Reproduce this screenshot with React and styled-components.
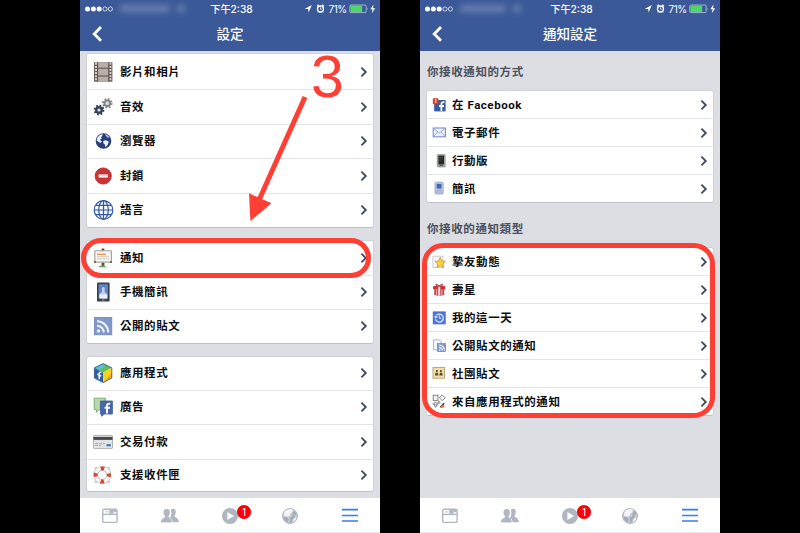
import React from "react";
import styled, { createGlobalStyle } from "styled-components";

const RED = "#ff3f33";

/* ====================== settings icons (20 x 20) ====================== */

const FilmIcon = () => (
  <svg width="20" height="20" viewBox="0 0 20 20">
    <rect x="1" y="0.3" width="18.4" height="19.4" fill="#6b5d57" />
    <rect x="5" y="0.3" width="10.4" height="19.4" fill="#b8afa9" />
    <path d="M3 0.8V19.6M17.4 0.8V19.6" stroke="#d8d2cd" strokeWidth="2" strokeDasharray="2 1.1" />
    <path d="M4.6 0.3V19.7M15.8 0.3V19.7" stroke="#5d4f49" strokeWidth="0.8" />
    <path d="M4.6 6.2H15.8M4.6 14H15.8" stroke="#5d4f49" strokeWidth="1" />
  </svg>
);

const GearsIcon = () => (
  <svg width="20" height="20" viewBox="0 0 20 20">
    <circle cx="14.3" cy="6.3" r="4.3" fill="none" stroke="#85888d" strokeWidth="2" strokeDasharray="1.7 1.68" />
    <circle cx="14.3" cy="6.3" r="2.9" fill="#d5d6d8" stroke="#7d8085" strokeWidth="1.8" />
    <circle cx="6" cy="13" r="4.4" fill="none" stroke="#333e52" strokeWidth="2" strokeDasharray="1.7 1.75" />
    <circle cx="6" cy="13" r="2.8" fill="#dfe2e8" stroke="#36435a" strokeWidth="2.4" />
  </svg>
);

const GlobeIcon = () => (
  <svg width="20" height="20" viewBox="0 0 20 20">
    <circle cx="10.5" cy="10" r="7.8" fill="#263e7c" />
    <path d="M4.4 6.6L6.8 4 9.6 3 9.4 4.8 7.9 6.2 9 7.4 7.4 8 7.4 9.4 8.9 10.6 7.4 12 5.4 10.8 3.6 9.4Z" fill="#eef2fb" />
    <path d="M12 3L15 4.4 16.6 6.6 14.6 6.4 12.9 5Z" fill="#b6c4e4" />
    <path d="M10.2 10L12.6 9.2 15.8 10.6 14.9 13.4 12.5 16.2 11.8 13.6 10.4 12.2Z" fill="#eef2fb" />
  </svg>
);

const BlockIcon = () => (
  <svg width="20" height="20" viewBox="0 0 20 20">
    <circle cx="10.2" cy="10" r="8.1" fill="#cb3436" stroke="#b02528" strokeWidth="0.8" />
    <rect x="5.6" y="8.4" width="9.2" height="3.2" fill="#fbeceb" />
  </svg>
);

const LanguageIcon = () => (
  <svg width="20" height="20" viewBox="0 0 20 20">
    <g fill="#f3f6fd" stroke="#3357a0" strokeWidth="1.2">
      <circle cx="10.5" cy="10" r="9.3" />
      <ellipse cx="10.5" cy="10" rx="4.8" ry="9.3" />
      <path d="M10.5 0.8V19.2M1.3 10H19.7M3 5.3H18M3 14.7H18" />
    </g>
  </svg>
);

const BoardIcon = () => (
  <svg width="20" height="20" viewBox="0 0 20 20">
    <path d="M8.7 0.4H11.3V3H8.7ZM8.6 14.6H11.4V18.4H8.6Z" fill="#7a4a29" />
    <rect x="1.2" y="2.2" width="17.8" height="12.6" rx="1" fill="#aaa49b" />
    <rect x="2.4" y="3.3" width="15.4" height="10.2" fill="#f7f5f1" />
    <path d="M4 6.3H13" stroke="#f08a3c" strokeWidth="1.2" />
    <path d="M4 8.6H16M4 10.8H16" stroke="#cdc9c2" strokeWidth="0.9" />
    <path d="M5.6 19.2L7.2 17.4 8.8 18.2 10.4 17.2 12 18.2 14.4 19.2Z" fill="#57a35b" />
    <path d="M1 14H3M17 14H19" stroke="#57514b" strokeWidth="1.4" />
  </svg>
);

const PhoneIcon = () => (
  <svg width="20" height="20" viewBox="0 0 20 20">
    <rect x="4" y="0.4" width="12.6" height="19.2" rx="1.2" fill="#3b3f47" />
    <rect x="5.6" y="2.2" width="9.4" height="14.2" fill="#5e83c8" />
    <path d="M6.3 16.4V13.2Q6.3 11.2 8.6 10.4L9 8.6Q8.2 5 10.3 4.9 12.3 5 11.6 8.6L12 10.4Q14.3 11.2 14.3 13.2V16.4Z" fill="#bed0f2" />
    <rect x="6.6" y="12.6" width="7.4" height="3.8" fill="#edf2fc" />
    <rect x="9" y="17.6" width="2.6" height="1" fill="#9ba0a8" />
  </svg>
);

const FeedIcon = () => (
  <svg width="20" height="20" viewBox="0 0 20 20">
    <rect x="1.4" y="1.4" width="17.4" height="17.4" fill="#8398ca" stroke="#7085b9" strokeWidth="0.8" />
    <circle cx="5.5" cy="15" r="1.7" fill="#edf1fa" />
    <path d="M4 9.7A6.6 6.6 0 0 1 10.7 16.5M4 5.3A11 11 0 0 1 15.2 16.5" fill="none" stroke="#edf1fa" strokeWidth="2.1" />
  </svg>
);

const CubeIcon = () => (
  <svg width="20" height="20" viewBox="0 0 20 20">
    <path d="M10.2 0.6L18.8 4.8 10.2 9.4 1.4 4.8Z" fill="#63bd55" />
    <path d="M10.2 0.6L1.4 4.8 5.8 7 11.8 3.4Z" fill="#59bfe2" />
    <path d="M1.4 4.8L10.2 9.4V19.6L1.4 15Z" fill="#2861a9" />
    <path d="M18.8 4.8L10.2 9.4V19.6L18.8 15Z" fill="#f6d21e" />
    <path d="M18.8 10L10.2 19.6 18.8 15Z" fill="#f0ab1c" />
    <path d="M10.2 0.6L18.8 4.8V15L10.2 19.6 1.4 15V4.8Z" fill="none" stroke="#31527e" strokeWidth="0.8" />
    <path d="M8.4 9.6Q6.2 8.6 6.2 10.8V16.2M4.4 11.2L8.2 13" fill="none" stroke="#fff" strokeWidth="1.5" />
  </svg>
);

const AdsIcon = () => (
  <svg width="20" height="20" viewBox="0 0 20 20">
    <path d="M1.2 1.2H12.4V12.6H6L3.4 15.4V12.6H1.2Z" fill="#b5d8ad" stroke="#72a96d" strokeWidth="0.9" />
    <path d="M7.4 4H19.4V17H11.4L8.6 19.2V17H7.4Z" fill="#4968ac" stroke="#3b5998" strokeWidth="0.8" />
    <path d="M17.2 6.8Q14 6.2 14 9V16.6M11.6 10.8H17" fill="none" stroke="#fff" strokeWidth="2" />
  </svg>
);

const CardIcon = () => (
  <svg width="20" height="20" viewBox="0 0 20 20">
    <rect x="0.5" y="3.4" width="19" height="13.2" rx="1" fill="#e3e3e4" stroke="#a0a1a4" strokeWidth="0.8" />
    <path d="M0.5 6.4H19.5" stroke="#48494d" strokeWidth="3" />
    <path d="M2 11.6H12M2 13.4H8" stroke="#a6a8ad" strokeWidth="1" strokeDasharray="3 1" />
    <rect x="13.6" y="12" width="4.2" height="2.4" fill="#4b79bc" />
  </svg>
);

const BuoyIcon = () => (
  <svg width="20" height="20" viewBox="0 0 20 20">
    <circle cx="9.3" cy="10" r="6.6" fill="none" stroke="#aaa5a1" strokeWidth="4.6" />
    <circle cx="9.3" cy="10" r="6.6" fill="none" stroke="#f7f4f1" strokeWidth="3.6" />
    <circle
      cx="9.3"
      cy="10"
      r="6.6"
      fill="none"
      stroke="#cf4a3f"
      strokeWidth="4"
      strokeDasharray="3.6 6.77"
      strokeDashoffset="1.8"
    />
    <path d="M2 4.4V2.6H4M16.6 4.4V2.6H14.6M2 15.6V17.4H4M16.6 15.6V17.4H14.6" fill="none" stroke="#b9b3ae" strokeWidth="0.8" />
  </svg>
);

/* ====================== notification icons (14 x 14) ====================== */

const FbIcon = () => (
  <svg width="14" height="14" viewBox="0 0 14 14">
    <rect x="2.2" y="2" width="11.4" height="11.4" fill="#355ba1" />
    <path d="M12.4 4.2Q9.4 3.6 9.4 6.4V13M7 8H12" fill="none" stroke="#fff" strokeWidth="1.8" />
    <rect x="0.8" y="0.2" width="5.6" height="6" rx="0.8" fill="#dd432f" />
    <path d="M3.7 1.4V4.8" stroke="#fff" strokeWidth="1" />
  </svg>
);

const MailIcon = () => (
  <svg width="14" height="14" viewBox="0 0 14 14">
    <rect x="1.2" y="2" width="12.2" height="8.8" fill="#edf2fc" stroke="#6d86c3" />
    <path d="M1.4 2.4L7.3 7 13.2 2.4M1.4 10.6L5.5 6M13.2 10.6L9.2 6" fill="none" stroke="#8298ce" strokeWidth="0.8" />
  </svg>
);

const MobileIcon = () => (
  <svg width="14" height="14" viewBox="0 0 14 14">
    <rect x="5.2" y="0.4" width="8" height="12.6" rx="1" fill="#a9abaa" stroke="#82847f" strokeWidth="0.6" />
    <rect x="6.4" y="1.6" width="5.6" height="8.8" fill="#262829" />
    <path d="M7 3.6H11.2M7 6H10" stroke="#515653" strokeWidth="0.8" />
    <rect x="7.5" y="10.9" width="3.4" height="1" fill="#454745" />
  </svg>
);

const SmsIcon = () => (
  <svg width="14" height="14" viewBox="0 0 14 14">
    <rect x="3" y="0.2" width="8.2" height="11.8" rx="1" fill="#c5d0e6" stroke="#8b9dc6" strokeWidth="0.8" />
    <rect x="4.6" y="1.8" width="5" height="4.8" fill="#4769b4" />
    <path d="M4.6 8.2H9.6M4.6 10H9.6" stroke="#7289bb" strokeWidth="0.9" strokeDasharray="1.2 0.7" />
  </svg>
);

const StarIcon = () => (
  <svg width="14" height="14" viewBox="0 0 14 14">
    <rect x="0.9" y="1.2" width="10" height="11.4" fill="#f5f6f8" stroke="#bfc4cc" strokeWidth="0.8" />
    <path d="M8.2 2.4L9.9 6 13.5 6.4 10.8 8.9 11.6 12.6 8.2 10.7 4.9 12.6 5.7 8.9 3 6.4 6.5 6Z" fill="#fcd13b" stroke="#d29022" strokeWidth="0.8" />
  </svg>
);

const GiftIcon = () => (
  <svg width="14" height="14" viewBox="0 0 14 14">
    <path d="M1 3.2L7 2.4 13.4 3.2V6.2H1Z" fill="#c9373c" />
    <path d="M2.2 6H12.2V12L7.2 13 2.2 12Z" fill="#c9484b" />
    <path d="M4.6 6.4V12M9.8 6.4V12" stroke="#eebdba" strokeWidth="0.9" />
    <path d="M7.2 3V12.8" stroke="#f4d9d7" strokeWidth="2" />
    <path d="M7.2 3.2Q3.8 0 3.8 1.8 3.8 3.6 7.2 3.2 10.6 3.6 10.7 1.8 10.6 0 7.2 3.2Z" fill="#f1cbca" stroke="#bd3238" strokeWidth="1" />
  </svg>
);

const HistoryIcon = () => (
  <svg width="14" height="14" viewBox="0 0 14 14">
    <rect x="1.2" y="0.9" width="12" height="12" fill="#5077dd" stroke="#3d62c5" strokeWidth="0.8" />
    <path d="M3.6 8.4A4 4 0 1 0 4.6 4.2" fill="none" stroke="#dce7ff" strokeWidth="1.2" />
    <path d="M2.3 4.4L6 5.8 3.2 7.8Z" fill="#dce7ff" />
    <path d="M7.4 4.6V7.2H9.4" fill="none" stroke="#dce7ff" />
  </svg>
);

const PublicPostIcon = () => (
  <svg width="14" height="14" viewBox="0 0 14 14">
    <path d="M1.4 0.9H7.6L9.2 2.5V10.8H1.4Z" fill="#f4f6fa" stroke="#9aa6be" strokeWidth="0.8" />
    <rect x="5.6" y="4.6" width="8" height="8" fill="#7f98cf" stroke="#617ab4" strokeWidth="0.6" />
    <path d="M7 8.4A3.2 3.2 0 0 1 10.2 11.6M7 6A5.6 5.6 0 0 1 12.6 11.6" fill="none" stroke="#fff" strokeWidth="1.1" />
    <circle cx="7.7" cy="11" r="0.8" fill="#fff" />
  </svg>
);

const GroupIcon = () => (
  <svg width="14" height="14" viewBox="0 0 14 14">
    <rect x="1" y="0.4" width="11.6" height="10.8" fill="#f3dfa8" stroke="#b39d6b" strokeWidth="0.9" />
    <circle cx="4.9" cy="4.1" r="1.1" fill="#5b4b33" />
    <circle cx="8.9" cy="4.1" r="1.1" fill="#5b4b33" />
    <path d="M3 8.5Q3 5.6 4.9 5.6 6.4 5.6 6.4 8.5ZM7.3 8.5Q7.3 5.6 8.9 5.6 10.7 5.6 10.7 8.5Z" fill="#5b4b33" />
  </svg>
);

const AppsIcon = () => (
  <svg width="14" height="14" viewBox="0 0 14 14">
    <g fill="#f6f6f6" stroke="#77787a" strokeWidth="0.9">
      <rect x="1.2" y="0.2" width="4.8" height="5.4" />
      <path d="M10.3 -0.1L13.2 2.8 10.3 5.7 7.4 2.8Z" />
      <path d="M0.8 8L3.6 12.4 6.2 8" />
      <circle cx="3.4" cy="8.6" r="1.3" />
      <circle cx="7" cy="7.4" r="1" />
      <path d="M8.4 12.4L12.2 8.2" stroke="#3c3c3c" strokeWidth="1.6" />
    </g>
    <path d="M9 10.4H12.4V12.6H9Z" fill="#df7a37" />
  </svg>
);

/* ====================== bars ====================== */

function StatusIcons() {
  return (
    <StatusRight>
      <svg width="22" height="12" viewBox="0 0 22 12">
        <path d="M7.8 2L0.6 6H4.2L4.6 9.6Z" fill="#fff" />
        <circle cx="16.5" cy="6" r="3" fill="none" stroke="#fff" strokeWidth="1.3" />
        <path d="M13 3.2L14.8 1.8M20 3.2L18.2 1.8" stroke="#fff" strokeWidth="1.1" />
        <path d="M14.4 8.6L13.8 9.4M18.6 8.6L19.2 9.4" stroke="#fff" strokeWidth="0.9" />
        <path d="M16.5 4.4V6.2H17.8" fill="none" stroke="#fff" strokeWidth="0.8" />
      </svg>
      <Percent>71%</Percent>
      <svg width="29" height="12" viewBox="0 0 29 12">
        <rect x="1.8" y="2" width="16.4" height="7.6" rx="1.2" fill="none" stroke="#b9c5de" strokeWidth="0.8" />
        <rect x="2.4" y="2.6" width="11.8" height="6.4" fill="#4cd864" />
        <path d="M19 4.5Q20.2 5.8 19 7.1Z" fill="#b9c5de" />
        <path d="M25.4 1.4L22.4 6.3H24.6L23.8 10.2 27.2 5.2H25Z" fill="#fff" />
      </svg>
    </StatusRight>
  );
}

function Header({ title, wifi }) {
  return (
    <HeaderBar>
      <StatusBar>
        <Signal>
          <svg width="28" height="6" viewBox="0 0 28 6">
            <circle cx="2.5" cy="3" r="2.5" fill="#fff" />
            <circle cx="8.4" cy="3" r="2.5" fill="#fff" />
            <circle cx="14.2" cy="3" r="2.5" fill="#fff" />
            <circle cx="20" cy="3" r="2.1" fill="none" stroke="#fff" strokeWidth="0.7" />
            <circle cx="25.4" cy="3" r="2.1" fill="none" stroke="#fff" strokeWidth="0.7" />
          </svg>
          <Smudge $w={wifi ? 46 : 50} />
          <Smudge $w={8} />
        </Signal>
        <Clock>下午2:38</Clock>
        <StatusIcons />
      </StatusBar>
      <TitleBar>
        <svg width="12" height="18" viewBox="0 0 12 18">
          <path d="M10 2L3.2 8.9 10 15.8" fill="none" stroke="#fff" strokeWidth="2.8" />
        </svg>
        <Title>{title}</Title>
        <span />
      </TitleBar>
    </HeaderBar>
  );
}

function TabBar() {
  return (
    <Tabs>
      <Tab>
        <svg width="18" height="18" viewBox="0 0 18 18">
          <rect x="1.7" y="2.2" width="14.4" height="13.2" rx="1.5" fill="none" stroke="#b1b7c2" strokeWidth="1.4" />
          <path d="M1.8 7.4H16" stroke="#b1b7c2" strokeWidth="1.4" />
          <path d="M4 4.8H7.6" stroke="#d3d7de" strokeWidth="1.4" />
          <rect x="8.4" y="3" width="4" height="3.8" fill="#b1b7c2" />
          <rect x="12.4" y="3" width="3" height="2.2" fill="#b1b7c2" />
        </svg>
      </Tab>
      <Tab>
        <svg width="20" height="18" viewBox="0 0 20 18">
          <g fill="#b1b7c2">
            <path d="M10.8 2.8Q13 1 15.2 2.6 16.4 4.6 15.2 7.4 14.4 8.8 14.8 10 18.6 11 18.8 15.2H12.8Q12.2 12 9.7 10.6 11.4 9.8 11 8.4 12 6 10.8 2.8Z" />
            <path d="M6.6 2.1Q10 2 9.9 5.4 9.8 7.6 8.7 8.8 8.3 10.2 9.4 10.9 11.8 11.6 11.8 15.4H0.9Q1 11.8 4.4 10.7 5.4 10 4.8 8.8 3.4 7.6 3.5 5.4 3.5 2.1 6.6 2.1Z" />
          </g>
        </svg>
      </Tab>
      <Tab>
        <svg width="18" height="18" viewBox="0 0 18 18">
          <circle cx="9" cy="9" r="8" fill="#b1b7c2" />
          <path d="M6.4 5L13 9 6.4 13Z" fill="#fff" />
        </svg>
        <TabBadge>1</TabBadge>
      </Tab>
      <Tab>
        <svg width="18" height="18" viewBox="0 0 18 18">
          <circle cx="9" cy="9" r="7.5" fill="#c6cad3" stroke="#b1b7c2" strokeWidth="1" />
          <path d="M4.4 3.8Q8 1.2 12 2.6L11 5.4 9.2 6.6 8.8 8.8 6.8 9.6 3.2 9 3 6.4Z" fill="#f4f5f7" />
          <path d="M2.4 9.6L6 10.6 7.6 12.4 6.6 15.2Q3 13.6 2.4 9.6Z" fill="#a3aab7" />
          <path d="M13.2 4L15 5.8 15.2 8 13.4 7.6 13.4 10.4 11.6 12 10.4 15.6 8.6 15.8 9.2 12.6 8.4 10.6 10.4 10.2 11.6 8.2 11.8 5.6Z" fill="#a3aab7" />
          <path d="M13.8 11L15.6 10.4Q14.8 13.6 12 15L12.4 12.8Z" fill="#fafafb" />
        </svg>
      </Tab>
      <Tab>
        <svg width="18" height="18" viewBox="0 0 18 18">
          <path d="M1 2.6H17M1 8.5H17M1 14H17" stroke="#367cf5" strokeWidth="1.7" />
        </svg>
      </Tab>
    </Tabs>
  );
}

function List({ items, first, row, last, compact }) {
  return (
    <Card $first={first} $last={last}>
      {items.map(([Icon, label]) => (
        <Row key={label} $h={row} $compact={compact}>
          <Icon />
          <Label>{label}</Label>
          <svg width="8" height="12" viewBox="0 0 8 12">
            <path d="M1.4 1.7L5.8 6 1.4 10.3" fill="none" stroke="#414a63" strokeWidth="1.8" />
          </svg>
        </Row>
      ))}
    </Card>
  );
}

const mediaItems = [
  [FilmIcon, "影片和相片"],
  [GearsIcon, "音效"],
  [GlobeIcon, "瀏覽器"],
  [BlockIcon, "封鎖"],
  [LanguageIcon, "語言"],
];
const noticeItems = [
  [BoardIcon, "通知"],
  [PhoneIcon, "手機簡訊"],
  [FeedIcon, "公開的貼文"],
];
const appItems = [
  [CubeIcon, "應用程式"],
  [AdsIcon, "廣告"],
  [CardIcon, "交易付款"],
  [BuoyIcon, "支援收件匣"],
];
const methodItems = [
  [FbIcon, "在 Facebook"],
  [MailIcon, "電子郵件"],
  [MobileIcon, "行動版"],
  [SmsIcon, "簡訊"],
];
const typeItems = [
  [StarIcon, "摯友動態"],
  [GiftIcon, "壽星"],
  [HistoryIcon, "我的這一天"],
  [PublicPostIcon, "公開貼文的通知"],
  [GroupIcon, "社團貼文"],
  [AppsIcon, "來自應用程式的通知"],
];

export default function App() {
  return (
    <>
      <GlobalStyle />
      <Stage>
        <Phone>
          <Header title="設定" />
          <SettingsBody>
            <List items={mediaItems} first={35} row={34.5} last={34} />
            <List items={noticeItems} first={34} row={34.5} last={33.5} />
            <List items={appItems} first={33} row={34.5} last={32} />
          </SettingsBody>
          <TabBar />
        </Phone>
        <Phone>
          <Header title="通知設定" wifi />
          <NoticeBody>
            <SectionTitle>你接收通知的方式</SectionTitle>
            <List items={methodItems} first={27} row={28} last={28} compact />
            <SectionTitle>你接收的通知類型</SectionTitle>
            <List items={typeItems} first={27} row={28} last={28} compact />
          </NoticeBody>
          <TabBar />
        </Phone>

        {/* step marks over the phones */}
        <Ring $x={81} $y={238} $w={290} $h={40} $r={20} />
        <Ring $x={422} $y={243} $w={293} $h={175} $r={21} />
        <StepNumber>3</StepNumber>
        <ArrowMark width="64" height="130" viewBox="0 0 64 130">
          <path d="M60 7L14.5 109" stroke={RED} strokeWidth="5" />
          <path d="M4 103.3L26.5 113.3 5.4 131Z" fill={RED} />
        </ArrowMark>
      </Stage>
    </>
  );
}

/* ====================== styles ====================== */

const GlobalStyle = createGlobalStyle`
  body {
    margin: 0;
    background: #000;
    overflow: hidden;
  }
  * {
    box-sizing: border-box;
  }
  svg {
    display: block;
    flex: none;
    overflow: visible;
  }
`;

const Stage = styled.div`
  position: relative;
  display: flex;
  gap: 40px;
  width: 800px;
  height: 533px;
  padding: 0 80px;
  background: #000;
  overflow: hidden;
  font-family: Inter, "Noto Sans CJK TC", sans-serif;
`;

const Phone = styled.section`
  display: flex;
  flex-direction: column;
  width: 300px;
  height: 533px;
  background: #dcdee3;
`;

const HeaderBar = styled.header`
  flex: none;
  height: 51px;
  background: #3b5998;
  color: #fff;
`;
const StatusBar = styled.div`
  display: grid;
  grid-template-columns: 1fr 44px 1fr;
  align-items: center;
  height: 17px;
  padding: 0 3px 0 5px;
`;
const Signal = styled.div`
  display: flex;
  align-items: center;
  gap: 4px;
`;
const Smudge = styled.span`
  width: ${({ $w }) => $w}px;
  height: 7px;
  margin-left: 3px;
  background: rgba(255, 255, 255, 0.24);
  filter: blur(3px);
`;
const Clock = styled.div`
  padding-left: 1px;
  font-size: 10.2px;
  font-weight: 500;
  line-height: 16px;
  text-align: center;
  white-space: nowrap;
`;
const StatusRight = styled.div`
  display: flex;
  align-items: center;
  justify-content: flex-end;
`;
const Percent = styled.span`
  width: 22px;
  padding-left: 1px;
  font-size: 10px;
  line-height: 16px;
  letter-spacing: -0.5px;
  text-align: center;
`;
const TitleBar = styled.div`
  display: grid;
  grid-template-columns: 20px 1fr 20px;
  align-items: center;
  height: 33px;
  padding: 0 11px;
`;
const Title = styled.h1`
  margin: 0;
  font-size: 13.5px;
  font-weight: 500;
  line-height: 20px;
  text-align: center;
`;

const SettingsBody = styled.main`
  flex: 1;
  display: flex;
  flex-direction: column;
  gap: 12px;
  padding: 2px 6px 0;
`;
const NoticeBody = styled.main`
  flex: 1;
  display: flex;
  flex-direction: column;
  padding: 0 6px;
`;

const SectionTitle = styled.h2`
  display: flex;
  align-items: flex-end;
  height: 39px;
  margin: 0;
  padding: 0 0 8px 1px;
  font-size: 11.5px;
  font-weight: 700;
  line-height: 20px;
  letter-spacing: 0.6px;
  color: #4b505c;

  & ~ & {
    height: 44px;
  }
`;

const Row = styled.div`
  display: flex;
  align-items: center;
  gap: ${({ $compact }) => ($compact ? 6 : 7)}px;
  height: ${({ $h }) => $h}px;
  padding: 0 5px 0 ${({ $compact }) => ($compact ? 5 : 6)}px;

  & + & {
    border-top: 1px solid #e4e5e8;
  }
`;
const Card = styled.div`
  background: #fff;
  border: 1px solid #d0d2d6;
  border-bottom-color: #bfc1c6;
  border-radius: 3px;

  ${Row}:first-child {
    height: ${({ $first }) => $first}px;
  }
  ${Row}:last-child {
    height: ${({ $last }) => $last}px;
  }
`;
const Label = styled.span`
  flex: 1;
  font-family: Roboto, "Noto Sans CJK TC", sans-serif;
  font-size: 11.5px;
  font-weight: 700;
  line-height: 20px;
  letter-spacing: 0.55px;
  color: #0d0d0f;
  white-space: nowrap;
`;

const Tabs = styled.nav`
  flex: none;
  display: grid;
  grid-template-columns: repeat(5, 1fr);
  height: 35px;
  background: #fff;
  border-bottom: 1px solid #e8e9eb;
`;
const Tab = styled.div`
  position: relative;
  display: flex;
  align-items: center;
  justify-content: center;
  padding-top: 1px;
`;
const TabBadge = styled.span`
  position: absolute;
  top: 7px;
  left: 37px;
  width: 14px;
  height: 14px;
  border-radius: 50%;
  background: #f80008;
  color: #fff;
  font-size: 10px;
  line-height: 14px;
  text-align: center;
`;

const Ring = styled.div`
  position: absolute;
  left: ${({ $x }) => $x}px;
  top: ${({ $y }) => $y}px;
  width: ${({ $w }) => $w}px;
  height: ${({ $h }) => $h}px;
  border: 5px solid ${RED};
  border-radius: ${({ $r }) => $r}px;
`;
const StepNumber = styled.div`
  position: absolute;
  left: 311px;
  top: 43px;
  font-family: "Liberation Sans", Arial, sans-serif;
  font-size: 59px;
  line-height: 68px;
  color: ${RED};
`;
const ArrowMark = styled.svg`
  position: absolute;
  left: 245px;
  top: 90px;
`;
